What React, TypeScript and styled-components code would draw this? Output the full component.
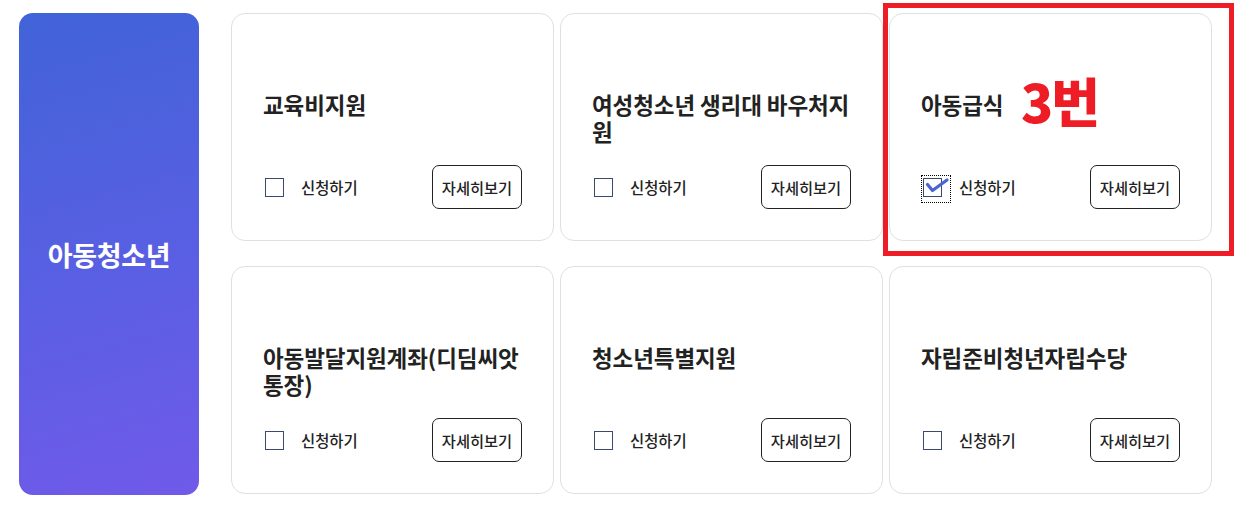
import React from "react";
import styled, { createGlobalStyle } from "styled-components";

const Global = createGlobalStyle`
  html, body { margin: 0; padding: 0; background: #fff; }
  body { font-family: "Noto Sans CJK KR", "Noto Sans", sans-serif; color: #222; }
  * { box-sizing: border-box; }
`;

const Page = styled.div`
  position: relative;
  width: 1234px;
  height: 509px;
  padding: 13px 0 0 19px;
  display: flex;
  gap: 32px;
  overflow: hidden;
`;

const Sidebar = styled.div`
  width: 180px;
  height: 482px;
  border-radius: 14px;
  background: linear-gradient(165deg, #4163d8 0%, #5a5fe3 55%, #705ae9 100%);
  display: flex;
  align-items: center;
  justify-content: center;
  color: #fff;
  font-size: 27px;
  font-weight: 700;
  letter-spacing: -0.3px;
`;

const Grid = styled.div`
  display: grid;
  grid-template-columns: repeat(3, 323px);
  grid-auto-rows: 228px;
  column-gap: 6px;
  row-gap: 25px;
`;

const Card = styled.div`
  border: 1px solid #e0e0e0;
  border-radius: 14px;
  background: #fff;
  padding: 77px 31px 31px;
  display: flex;
  flex-direction: column;
`;

const Title = styled.div`
  font-size: 22.5px;
  font-weight: 700;
  line-height: 27px;
  min-height: 54px;
  margin: 0 0 20px 0;
  color: #222;
  letter-spacing: -0.1px;
`;

const Footer = styled.div`
  display: flex;
  align-items: center;
  justify-content: space-between;
  height: 44px;
`;

const CheckLabel = styled.label`
  display: flex;
  align-items: center;
  gap: 17px;
  margin-left: 2px;
  font-size: 15.4px;
  font-weight: 500;
  color: #222;
`;

const Box = styled.span<{ $focused?: boolean }>`
  position: relative;
  width: 19px;
  height: 19px;
  border: 1.5px solid #3a4a6c;
  background: #fff;
  display: inline-block;
  &::after {
    content: "";
    display: ${(p) => (p.$focused ? "block" : "none")};
    position: absolute;
    left: -3px;
    top: -4px;
    width: 28px;
    height: 26px;
    border: 1px dotted #000;
  }
`;

const Check = styled.svg`
  position: absolute;
  left: -1.5px;
  top: -1.5px;
  overflow: visible;
`;

const DetailButton = styled.button`
  width: 90px;
  height: 44px;
  border: 1px solid #222;
  border-radius: 7px;
  background: #fff;
  font-family: "Noto Sans CJK KR", sans-serif;
  font-size: 15.3px;
  font-weight: 500;
  color: #222;
  padding: 0;
`;

const Annotation = styled.div`
  position: absolute;
  left: 1021px;
  top: 65px;
  font-family: "Noto Sans CJK KR", sans-serif;
  font-size: 53px;
  font-weight: 900;
  line-height: 70px;
  color: #ee1c25;
  letter-spacing: -2px;
`;

const Highlight = styled.div`
  position: absolute;
  left: 883px;
  top: 3px;
  width: 351px;
  height: 253px;
  border: 5px solid #ee1c25;
  pointer-events: none;
`;

type Item = { title: string; checked?: boolean };

const items: Item[] = [
  { title: "교육비지원" },
  { title: "여성청소년 생리대 바우처지원" },
  { title: "아동급식", checked: true },
  { title: "아동발달지원계좌(디딤씨앗통장)" },
  { title: "청소년특별지원" },
  { title: "자립준비청년자립수당" },
];

function Checkbox({ checked }: { checked?: boolean }) {
  return (
    <Box $focused={checked}>
      {checked && (
        <Check width="18" height="18" viewBox="0 0 18 18">
          <path
            d="M4.5 7.5 L9.5 13.5 L24 3"
            fill="none"
            stroke="#4a63d6"
            strokeWidth="3.2"
            strokeLinecap="round"
            strokeLinejoin="round"
          />
        </Check>
      )}
    </Box>
  );
}

export default function App() {
  return (
    <>
      <Global />
      <Page>
        <Sidebar>아동청소년</Sidebar>
        <Grid>
          {items.map((it) => (
            <Card key={it.title}>
              <Title>{it.title}</Title>
              <Footer>
                <CheckLabel>
                  <Checkbox checked={it.checked} />
                  신청하기
                </CheckLabel>
                <DetailButton>자세히보기</DetailButton>
              </Footer>
            </Card>
          ))}
        </Grid>
        <Highlight />
        <Annotation>3번</Annotation>
      </Page>
    </>
  );
}
